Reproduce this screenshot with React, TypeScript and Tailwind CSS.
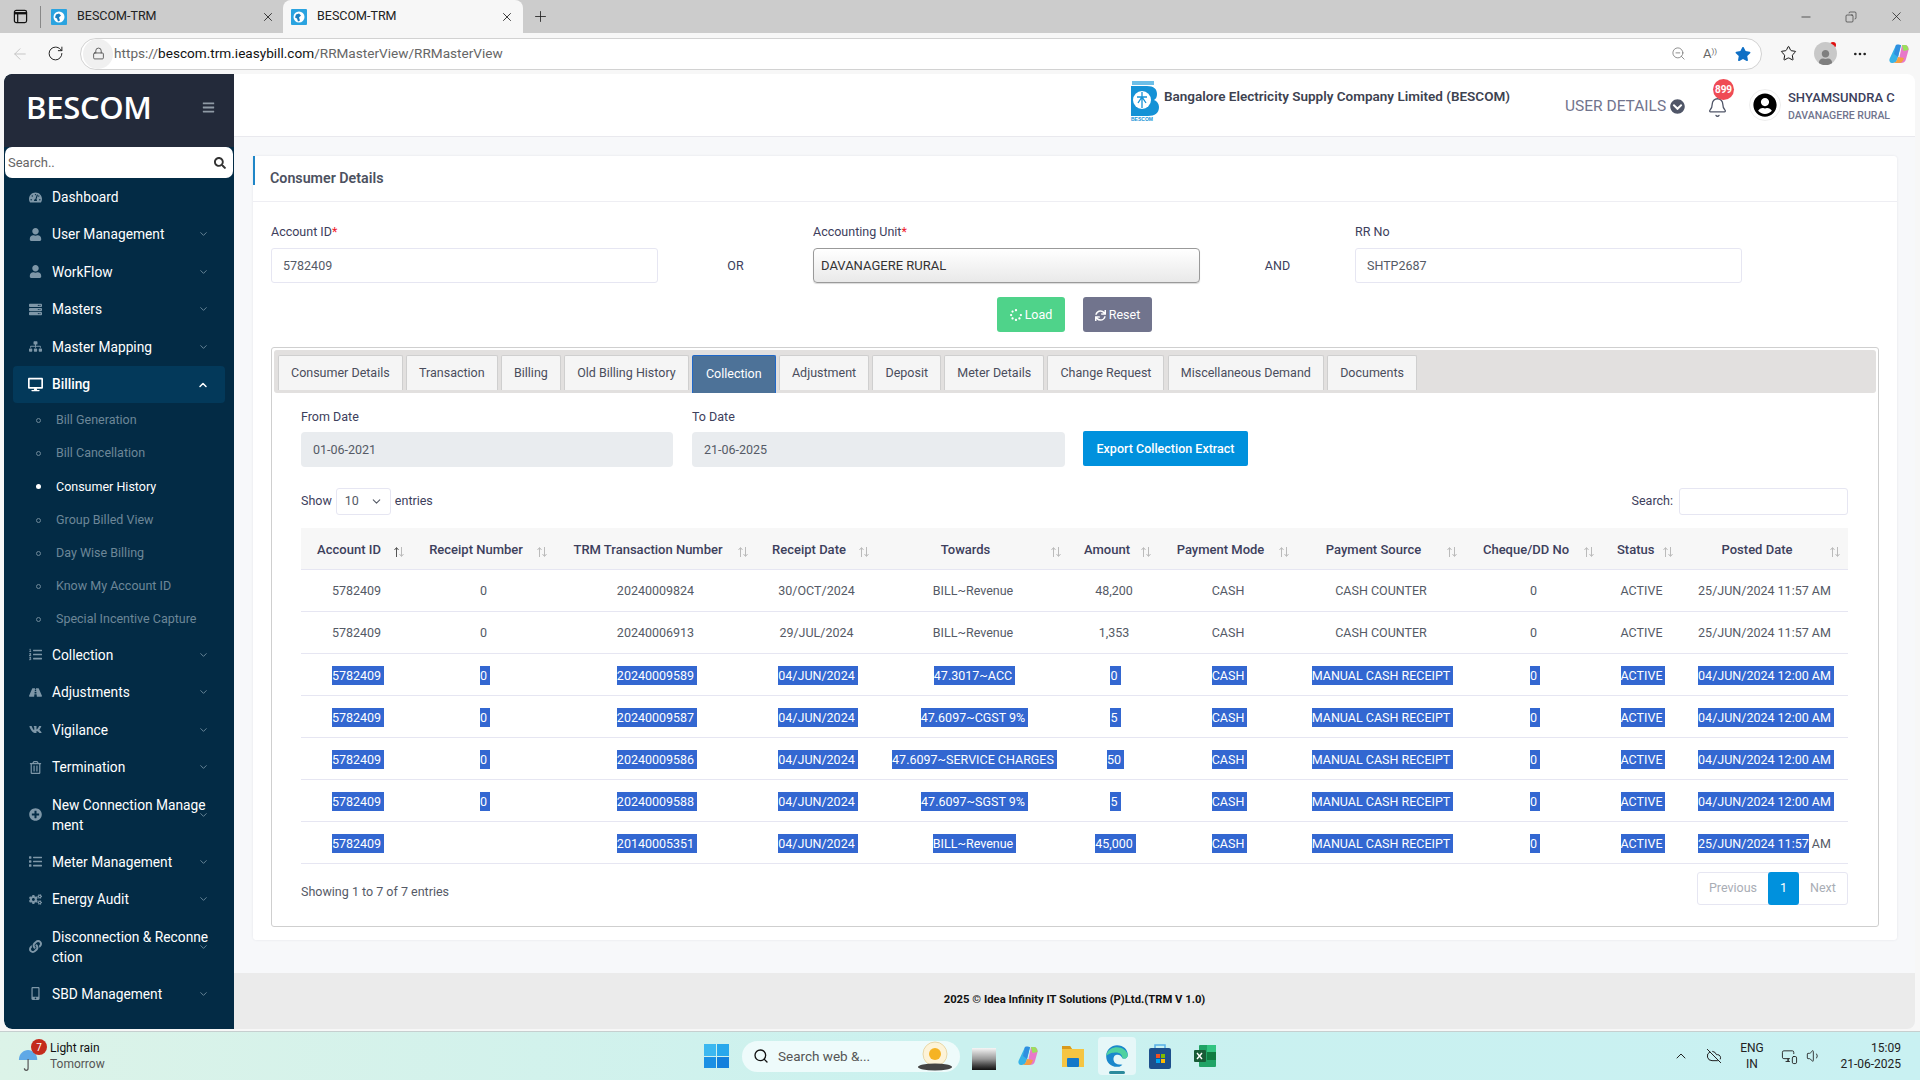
import type { ReactNode } from "react"
import {
  FaBars, FaChevronCircleDown, FaCogs, FaDesktop, FaLink, FaList, FaListOl, FaMobileAlt, FaPlusCircle,
  FaRegTrashAlt, FaRoad, FaSearch, FaServer, FaSitemap, FaSpinner, FaStar, FaSync,
  FaTachometerAlt, FaUser, FaUserCircle, FaVk,
} from "react-icons/fa"
import { ArrowLeft, Bell, ChevronDown, ChevronUp, CloudOff, Copy, Ellipsis, Lock, Minus, MonitorSmartphone, Plus, RotateCw, Search, Star, Volume1, X, ZoomOut } from "lucide-react"

const Favicon = () => (
  <svg viewBox="0 0 16 16" className="w-[16px] h-[16px] shrink-0">
    <rect x="0" y="0" width="16" height="16" rx="1" fill="#2aa3e0" />
    <circle cx="8" cy="8" r="5.500" fill="#fff" />
    <path d="M5 5.500l3-1 2 2-2 2 1 3-2 1-1-3-2-1z" fill="#1b7fc0" />
  </svg>
)

const Copilot = ({ size = 24 }: { size?: number }) => (
  <svg viewBox="0 0 24 24" width={size} height={size}>
    <path d="M9 3h5l-3 12c-.6 3-2 6-5 6H5c-2 0-3-2-2.500-4z" fill="#36b3e8" />
    <path d="M9 3c2-1 4 0 5 0l-3 12-4-3z" fill="#2f8fe0" />
    <path d="M15 3h3c2 0 4 2 3.500 5L19 17c-.6 3-3 4-5 4H8c3 0 4-3 4.500-6z" fill="#e879c9" />
    <path d="M15 3h3c2 0 3.500 2 3.500 5l-5 1z" fill="#9be05c" />
    <path d="M6 21c3 0 4-3 5-6l6 1c-1 3-2 5-5 5z" fill="#f59e42" />
  </svg>
)

const BrowserChrome = () => (
  <>
    <div className="h-[33px] bg-[#cccccc] flex items-start text-[#222] shrink-0">
      <div className="w-[40px] h-[33px] flex items-center justify-center pl-[1px]">
        <svg viewBox="0 0 16 16" className="w-[15px] h-[15px]" fill="none" stroke="#111" strokeWidth="1.300">
          <rect x="1.500" y="1.500" width="13" height="13" rx="2" />
          <path d="M1.500 4.500h13" strokeWidth="2.500" />
          <path d="M5 4.500v10" />
        </svg>
      </div>
      <div className="w-[1px] h-[22px] bg-[#888] mt-[6px] mr-[6px]" />
      <div className="w-[236px] h-[33px] flex items-center pl-[4px]">
        <Favicon />
        <span className="ml-[10px] text-[12.500px] flex-1">BESCOM-TRM</span>
        <X className="w-[14px] h-[14px] mr-[8px]" strokeWidth={1.500} />
      </div>
      <div className="w-[240px] h-[33px] bg-[#f7f7f7] rounded-t-[8px] flex items-center pl-[8px]">
        <Favicon />
        <span className="ml-[10px] text-[12.500px] flex-1">BESCOM-TRM</span>
        <X className="w-[14px] h-[14px] mr-[9px]" strokeWidth={1.500} />
      </div>
      <Plus className="w-[17px] h-[17px] mt-[8px] ml-[9px]" strokeWidth={1.200} />
      <div className="flex-1" />
      <div className="flex items-center h-[33px] gap-[32px] pr-[16px]">
        <Minus className="w-[14px] h-[14px]" strokeWidth={1.200} />
        <Copy className="w-[12px] h-[12px] -scale-x-100" strokeWidth={1.200} />
        <X className="w-[15px] h-[15px]" strokeWidth={1.200} />
      </div>
    </div>
    <div className="h-[41px] bg-[#f7f7f7] flex items-center shrink-0">
      <ArrowLeft className="w-[18px] h-[18px] ml-[11px] text-[#c4c4c4]" strokeWidth={1.300} />
      <RotateCw className="w-[17px] h-[17px] ml-[18px] text-[#222]" strokeWidth={1.400} />
      <div className="ml-[16px] w-[1682px] h-[32px] rounded-full bg-white border border-[#d2d2d2] flex items-center">
        <div className="w-[30px] h-[30px] ml-[2px] rounded-full bg-[#f0f0f0] flex items-center justify-center">
          <Lock className="w-[13px] h-[13px] text-[#444]" strokeWidth={1.500} />
        </div>
        <span className="ml-[1px] text-[13.600px] text-[#666]">
          https://<span className="text-[#111]">bescom.trm.ieasybill.com</span>/RRMasterView/RRMasterView
        </span>
        <div className="flex-1" />
        <ZoomOut className="w-[15px] h-[15px] text-[#777] mr-[17px]" strokeWidth={1.300} />
        <span className="text-[13px] text-[#666] mr-[18px]">A<sup className="text-[8px]">))</sup></span>
        <FaStar className="w-[16px] h-[16px] text-[#0f6fc5] mr-[10px]" />
      </div>
      <Star className="w-[17px] h-[17px] ml-[18px] text-[#111]" strokeWidth={1.400} />
      <div className="relative w-[23px] h-[23px] ml-[17px] rounded-full bg-[#c8c8c8] overflow-hidden flex items-end justify-center">
        <FaUser className="w-[15px] h-[15px] text-[#7f7f7f]" />
      </div>
      <div className="w-[6px] h-[6px] rounded-full bg-[#e01010] -ml-[7px] -mt-[17px]" />
      <Ellipsis className="w-[16px] h-[16px] ml-[16px] text-[#222]" />
      <div className="ml-[19px]"><Copilot size={24} /></div>
    </div>
  </>
)

type NavItem = { label: string; icon: ReactNode; h: number; open?: boolean }

const icn = "w-[13px] h-[13px]"
const topItems: NavItem[] = [
  { label: "User Management", icon: <FaUser className={icn} />, h: 38 },
  { label: "WorkFlow", icon: <FaUser className={icn} />, h: 37 },
  { label: "Masters", icon: <FaServer className={icn} />, h: 38 },
  { label: "Master Mapping", icon: <FaSitemap className={icn} />, h: 37 },
]
const lowerItems: NavItem[] = [
  { label: "Collection", icon: <FaListOl className={icn} />, h: 37 },
  { label: "Adjustments", icon: <FaRoad className={icn} />, h: 38 },
  { label: "Vigilance", icon: <FaVk className={icn} />, h: 37 },
  { label: "Termination", icon: <FaRegTrashAlt className={icn} />, h: 38 },
  { label: "New Connection Manage\nment", icon: <FaPlusCircle className={icn} />, h: 57 },
  { label: "Meter Management", icon: <FaList className={icn} />, h: 37 },
  { label: "Energy Audit", icon: <FaCogs className={icn} />, h: 38 },
  { label: "Disconnection & Reconne\nction", icon: <FaLink className={icn} />, h: 57 },
  { label: "SBD Management", icon: <FaMobileAlt className={icn} />, h: 37 },
]
const billingSub = ["Bill Generation", "Bill Cancellation", "Consumer History", "Group Billed View", "Day Wise Billing", "Know My Account ID", "Special Incentive Capture"]

const NavRow = ({ item }: { item: NavItem }) => (
  <div className="relative flex items-center pl-[21px] shrink-0 text-white text-[13.750px] leading-[20px]" style={{ height: item.h }}>
    <span className="w-[20px] flex justify-center text-[#7e97a8] shrink-0">{item.icon}</span>
    <span className="ml-[7px] whitespace-pre-line">{item.label}</span>
    <ChevronDown className="absolute right-[25px] top-1/2 -translate-y-1/2 w-[11px] h-[11px] text-[#6f8b9c]" />
  </div>
)

const Sidebar = () => (
  <div className="w-[230px] h-full bg-[#032b45] rounded-l-[8px] overflow-hidden flex flex-col shrink-0">
    <div className="h-[73px] bg-[#232a3a] flex items-center justify-between pl-[22px] pr-[19px] pb-[7px] shrink-0">
      <span className="text-[31px] font-semibold font-['Open_Sans',sans-serif] text-white leading-none tracking-[-0.3px]">BESCOM</span>
      <FaBars className="w-[13px] h-[13px] text-[#8f9aa5]" />
    </div>
    <div className="h-[31px] mx-[1px] -mt-[0px] bg-white rounded-[7px] flex items-center justify-between pl-[3px] pr-[7px] shrink-0">
      <span className="text-[13px] text-[#666]">Search..</span>
      <FaSearch className="w-[12px] h-[12px] text-[#333]" />
    </div>
    <div className="h-[37px] pt-[1px] flex items-center pl-[21px] shrink-0 text-white text-[13.750px]">
      <span className="w-[20px] flex justify-center text-[#7e97a8]"><FaTachometerAlt className={icn} /></span>
      <span className="ml-[7px]">Dashboard</span>
    </div>
    {topItems.map(item => <NavRow key={item.label} item={item} />)}
    <div className="relative h-[37px] mx-[9px] mt-[1px] pl-[12px] rounded-[4px] bg-[#03395a] flex items-center text-white text-[13.750px] font-medium shrink-0">
      <span className="w-[20px] flex justify-center"><FaDesktop className="w-[15px] h-[15px]" /></span>
      <span className="ml-[7px]">Billing</span>
      <ChevronUp className="absolute right-[16px] top-1/2 -translate-y-1/2 w-[12px] h-[12px]" strokeWidth={3} />
    </div>
    <div className="flex flex-col pt-[1px] shrink-0">
      {billingSub.map(s => {
        const active = s === "Consumer History"
        return (
          <div key={s} className={`h-[33.200px] flex items-center pl-[32px] text-[12.500px] ${active ? "text-white" : "text-[#6d8798]"}`}>
            <span className={`w-[5px] h-[5px] rounded-full ${active ? "bg-white" : "border border-[#6d8798]"}`} />
            <span className="ml-[15px]">{s}</span>
          </div>
        )
      })}
    </div>
    {lowerItems.map(item => <NavRow key={item.label} item={item} />)}
  </div>
)

const Logo = () => (
  <svg viewBox="0 0 30 41" className="w-[30px] h-[41px] shrink-0">
    <path d="M2 1h22v4H2z" fill="#1f9ddb" opacity="0.650" />
    <path d="M1 6h16c7 0 10 3 10 8 0 3-1 5-3 6 3 1 5 4 5 7 0 6-4 9-11 9H1z" fill="#1592d6" />
    <circle cx="12" cy="20" r="9" fill="#fff" />
    <path d="M12 12v16M7 17h10M8 23l4-6 4 6" stroke="#1592d6" strokeWidth="1.300" fill="none" />
    <text x="1" y="40.500" fontSize="5" fontWeight="700" fill="#1592d6" fontFamily="'Liberation Sans', sans-serif">BESCOM</text>
  </svg>
)

const TopHeader = () => (
  <div className="h-[63px] bg-white border-b border-[#e9e9ee] flex shrink-0">
    <div className="ml-[896px] mt-[6px]"><Logo /></div>
    <span className="ml-[4px] mt-[13px] w-[347px] text-[13.500px] font-semibold text-[#3d4250] whitespace-nowrap leading-[18px]">Bangalore Electricity Supply Company Limited (BESCOM)</span>
    <span className="ml-[54px] mt-[21px] w-[100px] text-[15.500px] text-[#71748d] leading-[22px] whitespace-nowrap">USER DETAILS</span>
    <FaChevronCircleDown className="ml-[5px] mt-[25px] w-[15px] h-[15px] text-[#505668]" />
    <div className="relative ml-[22px] mt-[22px] w-[20px] h-[24px]">
      <Bell className="w-[21px] h-[23px] text-[#505668]" strokeWidth={1.500} />
      <span className="absolute -top-[17px] left-[6px] w-[21px] h-[21px] rounded-full bg-[#ef4b55] text-white text-[10px] font-bold flex items-center justify-center">899</span>
    </div>
    <div className="ml-[22px] mt-[15px] w-[32px] h-[32px] rounded-full bg-white border border-[#eee] flex items-center justify-center">
      <FaUserCircle className="w-[24px] h-[24px] text-black" />
    </div>
    <div className="ml-[7px] mt-[15px] flex flex-col whitespace-nowrap">
      <span className="text-[13px] font-medium text-[#3d405c] leading-[18px]">SHYAMSUNDRA C</span>
      <span className="mt-[1px] text-[10.500px] font-medium text-[#71748d] leading-[16px]">DAVANAGERE RURAL</span>
    </div>
  </div>
)

const tabs = ["Consumer Details", "Transaction", "Billing", "Old Billing History", "Collection", "Adjustment", "Deposit", "Meter Details", "Change Request", "Miscellaneous Demand", "Documents"]

const SortIcon = ({ dark }: { dark?: boolean }) => (
  <svg viewBox="0 0 12 12" className="absolute right-[7px] top-[18px] w-[12px] h-[12px]" fill="none" strokeWidth="1">
    <path d="M3.500 11V2M1.500 4l2-2.500 2 2.500" stroke={dark ? "#555" : "#bbb"} />
    <path d="M8.500 1v9M6.500 8l2 2.500 2-2.500" stroke="#bbb" />
  </svg>
)

const columns = [
  { title: "Account ID", w: "w-[111px]" },
  { title: "Receipt Number", w: "w-[143px]" },
  { title: "TRM Transaction Number", w: "w-[201px]" },
  { title: "Receipt Date", w: "w-[121px]" },
  { title: "Towards", w: "w-[192px]" },
  { title: "Amount", w: "w-[90px]" },
  { title: "Payment Mode", w: "w-[138px]" },
  { title: "Payment Source", w: "w-[168px]" },
  { title: "Cheque/DD No", w: "w-[137px]" },
  { title: "Status", w: "w-[79px]" },
  { title: "Posted Date", w: "w-[167px]" },
]

const rows: { cells: string[]; selected: boolean }[] = [
  { cells: ["5782409", "0", "20240009824", "30/OCT/2024", "BILL~Revenue", "48,200", "CASH", "CASH COUNTER", "0", "ACTIVE", "25/JUN/2024 11:57 AM"], selected: false },
  { cells: ["5782409", "0", "20240006913", "29/JUL/2024", "BILL~Revenue", "1,353", "CASH", "CASH COUNTER", "0", "ACTIVE", "25/JUN/2024 11:57 AM"], selected: false },
  { cells: ["5782409", "0", "20240009589", "04/JUN/2024", "47.3017~ACC", "0", "CASH", "MANUAL CASH RECEIPT", "0", "ACTIVE", "04/JUN/2024 12:00 AM"], selected: true },
  { cells: ["5782409", "0", "20240009587", "04/JUN/2024", "47.6097~CGST 9%", "5", "CASH", "MANUAL CASH RECEIPT", "0", "ACTIVE", "04/JUN/2024 12:00 AM"], selected: true },
  { cells: ["5782409", "0", "20240009586", "04/JUN/2024", "47.6097~SERVICE CHARGES", "50", "CASH", "MANUAL CASH RECEIPT", "0", "ACTIVE", "04/JUN/2024 12:00 AM"], selected: true },
  { cells: ["5782409", "0", "20240009588", "04/JUN/2024", "47.6097~SGST 9%", "5", "CASH", "MANUAL CASH RECEIPT", "0", "ACTIVE", "04/JUN/2024 12:00 AM"], selected: true },
  { cells: ["5782409", "", "20140005351", "04/JUN/2024", "BILL~Revenue", "45,000", "CASH", "MANUAL CASH RECEIPT", "0", "ACTIVE", "25/JUN/2024 11:57|AM"], selected: true },
]

const Sel = ({ children, tail = true }: { children: ReactNode; tail?: boolean }) => (
  <span className={`inline-block h-[19px] leading-[19px] bg-[#3367d1] text-white whitespace-pre ${tail ? "pr-[3px] -mr-[3px]" : ""}`}>{children}</span>
)

const Cell = ({ text, selected }: { text: string; selected: boolean }) => {
  if (!selected || text === "") return <>{text}</>
  if (text.includes("|")) {
    const [a, b] = text.split("|")
    return <><Sel tail={false}>{a}</Sel> {b}</>
  }
  return <Sel>{text}</Sel>
}

const DataTable = () => (
  <table className="w-[1547px] table-fixed border-collapse text-[12.500px]">
    <colgroup>
      {columns.map(c => <col key={c.title} className={c.w} />)}
    </colgroup>
    <thead>
      <tr className="h-[41px] bg-[#f7f7f7] border-b border-[#e6e6f2]">
        {columns.map((c, i) => (
          <th key={c.title} className="relative pl-[15px] pr-[30px] pt-[2px] text-[13px] font-medium text-[#3d405c] text-center whitespace-nowrap">
            {c.title}
            <SortIcon dark={i === 0} />
          </th>
        ))}
      </tr>
    </thead>
    <tbody>
      {rows.map((r, ri) => (
        <tr key={ri} className="h-[42px] border-b border-[#e6e6f2] text-[#555a66]">
          {r.cells.map((t, ci) => (
            <td key={ci} className="text-center whitespace-nowrap p-0 pt-[3px]">
              <Cell text={t} selected={r.selected} />
            </td>
          ))}
        </tr>
      ))}
    </tbody>
  </table>
)

const inputCls = "w-[387px] h-[35px] rounded-[3px] border border-[#e6e6f2] bg-white flex items-center pt-[1px] text-[12.500px] text-[#555a66]"

const ConsumerCard = () => (
  <div className="relative w-[1644px] h-[784px] bg-white rounded-[3px] shadow-[0_0_2px_rgba(100,100,120,0.150)]">
    <div className="absolute left-0 top-0 w-[2px] h-[29px] bg-[#1f86c7]" />
    <div className="h-[46px] border-b border-[#eeeef3] flex items-center pl-[17px]">
      <span className="text-[14.250px] font-semibold text-[#4c5160]">Consumer Details</span>
    </div>
    <div className="pl-[18px] pt-[21px]">
      <div className="flex items-end text-[12.500px] text-[#3d405c]">
        <div className="flex flex-col gap-[8px]">
          <span className="leading-[17px]">Account ID<span className="text-[#ef172c]">*</span></span>
          <div className={`${inputCls} pl-[11px]`}>5782409</div>
        </div>
        <div className="w-[155px] h-[35px] pt-[2px] flex items-center justify-center">OR</div>
        <div className="flex flex-col gap-[8px]">
          <span className="leading-[17px]">Accounting Unit<span className="text-[#ef172c]">*</span></span>
          <div className="w-[387px] h-[35px] rounded-[4px] border border-[#9a9a9a] bg-gradient-to-b from-[#ffffff] via-[#f4f4f4] to-[#e9e9e9] flex items-center pl-[7px] text-[13px] text-[#333] shadow-[0_1px_1px_rgba(0,0,0,0.150)]">DAVANAGERE RURAL</div>
        </div>
        <div className="w-[155px] h-[35px] pt-[2px] flex items-center justify-center">AND</div>
        <div className="flex flex-col gap-[8px]">
          <span className="leading-[17px]">RR No</span>
          <div className={`${inputCls} pl-[11px]`}>SHTP2687</div>
        </div>
      </div>
      <div className="flex ml-[726px] mt-[14px] gap-[18px] text-[12.500px] text-white">
        <div className="w-[68px] h-[35px] pt-[1px] rounded-[3px] bg-[#4fd38a] flex items-center justify-center gap-[3px]"><FaSpinner className="w-[12px] h-[12px]" />Load</div>
        <div className="w-[69px] h-[35px] pt-[1px] rounded-[3px] bg-[#71748d] flex items-center justify-center gap-[3px]"><FaSync className="w-[11px] h-[11px]" />Reset</div>
      </div>
      <div className="mt-[15px] w-[1608px] h-[580px] border border-[#cfcfcf] rounded-[3px]">
        <div className="mt-[2px] mx-[2px] h-[43px] bg-[#e2e0df] rounded-[3px] flex items-start gap-[3.300px] pl-[4px] pt-[5px] text-[12.500px]">
          {tabs.map(t => t === "Collection" ? (
            <div key={t} className="h-[38px] px-[13px] bg-[#4d7298] border border-[#2068c8] border-b-0 text-white flex items-center rounded-t-[2px]">{t}</div>
          ) : (
            <div key={t} className="h-[35px] px-[12px] bg-[#f5f5f5] border border-[#cfcfcf] border-b-0 text-[#4a4d5c] flex items-center rounded-t-[2px]">{t}</div>
          ))}
        </div>
        <div className="pl-[29px] pt-[15px] text-[12.500px]">
          <div className="flex items-end">
            <div className="flex flex-col gap-[7px] text-[#3d405c]">
              <span className="leading-[17px]">From Date</span>
              <div className="w-[372px] h-[35px] pt-[1px] rounded-[4px] bg-[#e9ecef] flex items-center pl-[12px] text-[#555a66]">01-06-2021</div>
            </div>
            <div className="ml-[19px] flex flex-col gap-[7px] text-[#3d405c]">
              <span className="leading-[17px]">To Date</span>
              <div className="w-[373px] h-[35px] pt-[1px] rounded-[4px] bg-[#e9ecef] flex items-center pl-[12px] text-[#555a66]">21-06-2025</div>
            </div>
            <div className="ml-[18px] mb-[1px] w-[165px] h-[35px] pt-[2px] rounded-[2px] bg-[#0091dd] text-white font-medium flex items-center justify-center">Export Collection Extract</div>
          </div>
          <div className="mt-[21px] w-[1547px] h-[27px] flex items-center justify-between text-[#3d405c]">
            <div className="flex items-center">
              <span>Show</span>
              <div className="ml-[4px] w-[55px] h-[27px] rounded-[3px] border border-[#e6e6f2] flex items-center pl-[8px] gap-[11px] text-[#555a66]">10<ChevronDown className="w-[13px] h-[13px]" /></div>
              <span className="ml-[4px]">entries</span>
            </div>
            <div className="flex items-center">
              <span>Search:</span>
              <div className="ml-[6px] w-[169px] h-[27px] rounded-[3px] border border-[#e6e6f2]" />
            </div>
          </div>
          <div className="mt-[13px]"><DataTable /></div>
          <div className="mt-[8px] w-[1547px] flex items-start justify-between">
            <span className="text-[#555a66] mt-[10px] leading-[20px]">Showing 1 to 7 of 7 entries</span>
            <div className="flex h-[33px] rounded-[3px] border border-[#e6e6f2] text-[#a9adb5] items-stretch">
              <span className="w-[70px] flex items-center justify-center">Previous</span>
              <span className="w-[31px] -my-[1px] rounded-[3px] bg-[#0091dd] text-white flex items-center justify-center">1</span>
              <span className="w-[48px] flex items-center justify-center">Next</span>
            </div>
          </div>
        </div>
      </div>
    </div>
  </div>
)

const Taskbar = () => (
  <div className="h-[48px] bg-gradient-to-r from-[#dcf3e8] via-[#caf1ef] to-[#c9f1f2] flex items-center relative shrink-0">
    <div className="relative ml-[18px] w-[24px] h-[30px]">
      <svg viewBox="0 0 24 28" className="absolute left-0 top-[6px] w-[22px] h-[26px]">
        <path d="M1 14C1 7 6 3 11 3s10 4 10 11z" fill="#5fa8e6" />
        <path d="M11 13v10c0 3-4 3-4 0" stroke="#555" strokeWidth="1.300" fill="none" />
      </svg>
      <span className="absolute left-[13px] -top-[2px] w-[16px] h-[16px] rounded-full bg-[#c42b1c] text-white text-[10px] flex items-center justify-center">7</span>
    </div>
    <div className="ml-[8px] w-[100px] flex flex-col text-[12px] leading-[16px]">
      <span className="text-[#111]">Light rain</span>
      <span className="text-[#555]">Tomorrow</span>
    </div>
    <div className="ml-[554px] grid grid-cols-2 gap-[1px] w-[25px] h-[24px] shrink-0">
      <span className="bg-[#3cb8f0]" /><span className="bg-[#28a8ec]" /><span className="bg-[#1a90e4]" /><span className="bg-[#1480dc]" />
    </div>
    <div className="ml-[13px] w-[218px] h-[31px] rounded-full bg-[#eefbfb] flex items-center pl-[11px] text-[13.500px] text-[#555]">
      <Search className="w-[16px] h-[16px] text-[#111]" strokeWidth={2} />
      <span className="ml-[9px] w-[125px]">Search web &amp;...</span>
      <svg viewBox="0 0 40 30" className="ml-[10px] w-[44px] h-[30px]">
        <circle cx="20" cy="13" r="12" fill="#fdf3d8" stroke="#e8d8a8" />
        <circle cx="20" cy="13" r="6" fill="#f5b324" />
        <ellipse cx="20" cy="26" rx="17" ry="3.500" fill="#444" />
      </svg>
    </div>
    <div className="ml-[12px] w-[24px] h-[22px] mt-[6px] bg-gradient-to-b from-[#f6f6f6] via-[#999] to-[#111] shrink-0" />
    <div className="ml-[20px]"><Copilot size={24} /></div>
    <svg viewBox="0 0 24 24" className="ml-[21px] w-[24px] h-[24px]">
      <path d="M1 2h8l2 3h12v18H1z" fill="#f5c542" />
      <path d="M1 2h8l2 3H1z" fill="#d99a1c" />
      <rect x="6" y="14" width="12" height="9" rx="1" fill="#1479c9" />
    </svg>
    <div className="relative ml-[13px] w-[38px] h-[38px] rounded-[4px] bg-[#e6f7f8] flex items-center justify-center">
      <svg viewBox="0 0 24 24" className="w-[26px] h-[26px]">
        <path d="M2 12C2 6 7 2 12 2c6 0 10 4 10 9 0 3-3 4-5 3-1-2-3-4-6-3-3 1-3 6 0 8 2 1 4 1 6 1-2 2-4 2-5 2C6 22 2 18 2 12z" fill="#1a88cc" />
        <path d="M2 12C3 6 8 4 12 4c5 0 9 3 10 7 0 3-3 4-5 3 0-4-4-6-8-5-3 0-6 2-7 3z" fill="#4fd1a0" />
      </svg>
      <span className="absolute bottom-[1px] left-1/2 -translate-x-1/2 w-[16px] h-[3px] rounded-full bg-[#2b8a9c]" />
    </div>
    <svg viewBox="0 0 24 26" className="ml-[12px] w-[24px] h-[26px]">
      <rect x="1" y="5" width="22" height="21" rx="2" fill="#1d4f8c" />
      <path d="M7 5V2h10v3" stroke="#58b0e8" strokeWidth="1.500" fill="none" />
      <rect x="8" y="11" width="4" height="4" fill="#f25022" /><rect x="13" y="11" width="4" height="4" fill="#7fba00" />
      <rect x="8" y="16" width="4" height="4" fill="#00a4ef" /><rect x="13" y="16" width="4" height="4" fill="#ffb900" />
    </svg>
    <svg viewBox="0 0 24 24" className="ml-[21px] w-[24px] h-[24px]">
      <rect x="6" y="1" width="17" height="22" rx="1" fill="#21a366" />
      <rect x="14" y="1" width="9" height="7" fill="#33c481" /><rect x="14" y="8" width="9" height="8" fill="#107c41" />
      <rect x="1" y="6" width="12" height="12" rx="1" fill="#185c37" />
      <path d="M4 9l5 6M9 9l-5 6" stroke="#fff" strokeWidth="1.400" />
    </svg>
    <div className="flex-1" />
    <ChevronUp className="w-[16px] h-[16px] text-[#222] mr-[17px]" strokeWidth={1.500} />
    <CloudOff className="w-[16px] h-[16px] text-[#222] mr-[15px]" strokeWidth={1.500} />
    <div className="w-[30px] flex flex-col items-center text-[12px] text-[#222] leading-[16px] mr-[14px]"><span>ENG</span><span>IN</span></div>
    <MonitorSmartphone className="w-[17px] h-[17px] text-[#222] mr-[8px]" strokeWidth={1.300} />
    <Volume1 className="w-[16px] h-[16px] text-[#222] mr-[9px]" strokeWidth={1.300} />
    <div className="w-[70px] flex flex-col items-end text-[12px] text-[#222] leading-[16px] mr-[19px]"><span>15:09</span><span>21-06-2025</span></div>
  </div>
)

export default function App() {
  return (
    <div className="w-[1920px] h-[1080px] overflow-hidden bg-[#f7f7f7] flex flex-col font-['Roboto','Noto_Sans',sans-serif]">
      <BrowserChrome />
      <div className="h-[955px] ml-[4px] mr-[5px] flex shrink-0 rounded-[8px] overflow-hidden">
        <Sidebar />
        <div className="flex-1 flex flex-col bg-[#f7f8fa]">
          <TopHeader />
          <div className="flex-1 pl-[19px] pt-[19px]"><ConsumerCard /></div>
          <div className="h-[56px] bg-[#ebebeb] flex items-center justify-center pb-[1px] text-[11.250px] font-bold text-[#111] shrink-0">2025 © Idea Infinity IT Solutions (P)Ltd.(TRM V 1.0)</div>
        </div>
      </div>
      <div className="h-[3px] border-b border-[#c6cfcf] shrink-0" />
      <Taskbar />
    </div>
  )
}
